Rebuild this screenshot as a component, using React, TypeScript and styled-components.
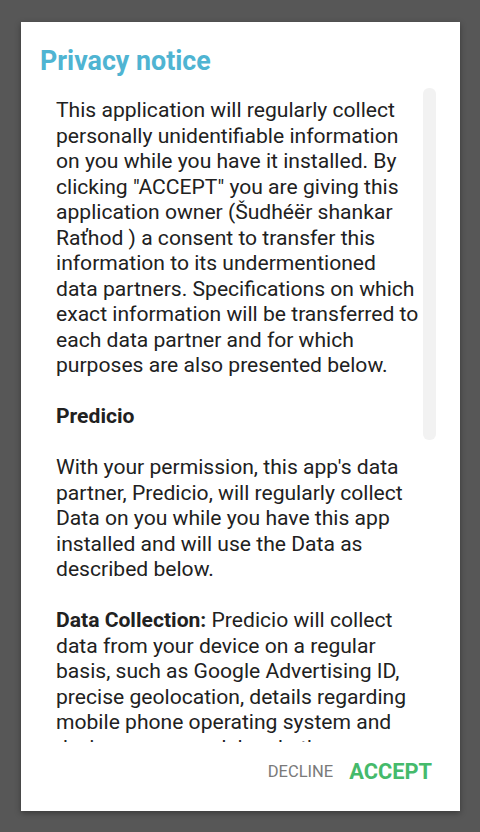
import React from 'react';
import styled, { createGlobalStyle } from 'styled-components';

const GlobalStyle = createGlobalStyle`
  html, body {
    margin: 0;
    padding: 0;
    background: #575757;
  }
  body {
    font-family: Roboto, "Noto Sans", "Liberation Sans", sans-serif;
  }
`;

const Screen = styled.div`
  width: 480px;
  height: 832px;
  box-sizing: border-box;
  padding: 22px 20px 21px 21px;
  background: #575757;
  display: flex;
`;

const Dialog = styled.div`
  flex: 1;
  background: #ffffff;
  display: flex;
  flex-direction: column;
  box-shadow: 0 2px 6px rgba(0, 0, 0, 0.35);
`;

const Title = styled.h1`
  margin: 0;
  padding: 24px 0 0 19px;
  height: 42px;
  font-size: 26.8px;
  line-height: 30px;
  font-weight: 700;
  color: #4fb4d2;
`;

const Body = styled.div`
  display: flex;
  height: 654px;
  padding: 0 24px 0 35px;
`;

const TextColumn = styled.div`
  flex: 1;
  overflow: hidden;
  padding-top: 9px;
`;

const Thumb = styled.div`
  width: 13px;
  margin-left: 1px;
  height: 352px;
  border-radius: 6px;
  background: #f2f2f2;
`;

const Paragraph = styled.p`
  margin: 0 0 25.5px;
  font-size: 21.1px;
  line-height: 25.5px;
  color: #212121;
`;

const Strong = styled.b`
  font-weight: 700;
`;

const Footer = styled.div`
  display: flex;
  justify-content: flex-end;
  align-items: flex-start;
  gap: 16px;
  padding: 17px 28px 0 0;
`;

const ActionButton = styled.button<{ $primary?: boolean }>`
  border: none;
  background: none;
  padding: 0;
  font-family: Roboto, "Noto Sans", "Liberation Sans", sans-serif;
  text-transform: uppercase;
  cursor: pointer;
  font-size: ${(p) => (p.$primary ? '21.8px' : '16.5px')};
  font-weight: ${(p) => (p.$primary ? 700 : 400)};
  line-height: 26px;
  color: ${(p) => (p.$primary ? '#45ba6b' : '#7a7a7a')};
`;

const App = (): JSX.Element => {
  return (
    <>
      <GlobalStyle />
      <Screen>
        <Dialog>
          <Title>Privacy notice</Title>

          <Body>
            <TextColumn>
              <Paragraph>
                This application will regularly collect personally unidentifiable information on you
                while you have it installed. By clicking "ACCEPT" you are giving this application
                owner (Šudhéër shankar Raťhod ) a consent to transfer this information to its
                undermentioned data partners. Specifications on which exact information will be
                transferred to each data partner and for which purposes are also presented below.
              </Paragraph>

              <Paragraph>
                <Strong>Predicio</Strong>
              </Paragraph>

              <Paragraph>
                With your permission, this app's data partner, Predicio, will regularly collect Data
                on you while you have this app installed and will use the Data as described below.
              </Paragraph>

              <Paragraph>
                <Strong>Data Collection:</Strong> Predicio will collect data from your device on a
                regular basis, such as Google Advertising ID, precise geolocation, details regarding
                mobile phone operating system and device name, model and other technical details.
              </Paragraph>
            </TextColumn>

            {/* Scroll thumb, content is scrolled to the top */}
            <Thumb />
          </Body>

          <Footer>
            <ActionButton>Decline</ActionButton>
            <ActionButton $primary>Accept</ActionButton>
          </Footer>
        </Dialog>
      </Screen>
    </>
  );
};

export default App;
